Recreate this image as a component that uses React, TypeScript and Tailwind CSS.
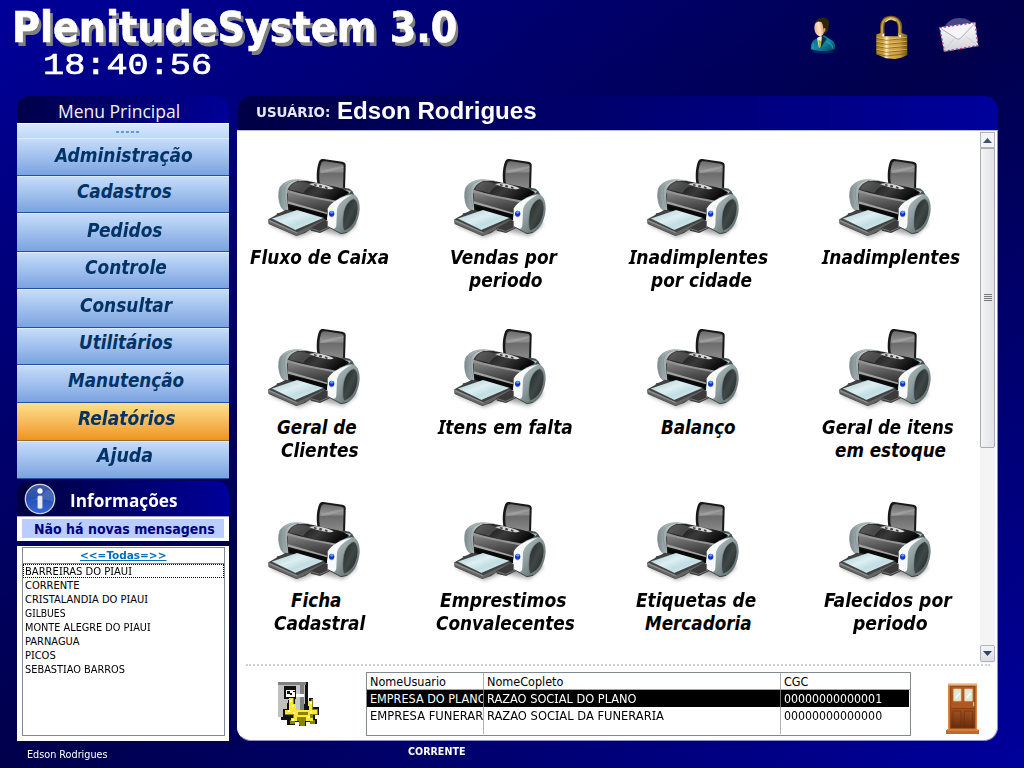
import { Fragment, useLayoutEffect, useRef, useState } from "react";

const TAHOMA = "font-['DejaVu_Sans_Condensed','DejaVu_Sans',sans-serif]";
const CALIBRI = "font-['Open_Sans',sans-serif]";

// Text stretched or squeezed horizontally so that it takes exactly `w` pixels.
function Fit({ text, w, x = 0, className = "", serifI = false }: { text: string; w: number; x?: number; className?: string; serifI?: boolean }) {
  const ref = useRef<HTMLSpanElement>(null);
  const [scale, setScale] = useState(1);
  useLayoutEffect(() => {
    if (ref.current) setScale(w / ref.current.offsetWidth);
  }, [w, text]);
  const parts = serifI ? text.split("I") : [text];
  return (
    <span className={"block shrink-0 whitespace-pre " + className} style={{ width: w, marginLeft: x }}>
      <span ref={ref} className="inline-block origin-left" style={{ transform: `scaleX(${scale})` }}>
        {parts.map((p, i) => (
          <Fragment key={i}>
            {i > 0 && <span className="font-['Noto_Sans',sans-serif] leading-none">I</span>}
            {p}
          </Fragment>
        ))}
      </span>
    </span>
  );
}

function PrinterDefs() {
  return (
    <svg width="0" height="0" className="absolute">
      <defs>
        <linearGradient id="tray" x1="0" y1="0" x2="0" y2="1">
          <stop offset="0" stopColor="#6a6a6a" /><stop offset=".35" stopColor="#929292" /><stop offset=".45" stopColor="#6c6c6c" /><stop offset="1" stopColor="#8b8b8b" />
        </linearGradient>
        <linearGradient id="lid" x1="0" y1="0" x2="1" y2=".4">
          <stop offset="0" stopColor="#555" /><stop offset=".35" stopColor="#222" /><stop offset=".6" stopColor="#3a3a3a" /><stop offset="1" stopColor="#080808" />
        </linearGradient>
        <linearGradient id="front" x1="0" y1="0" x2=".3" y2="1">
          <stop offset="0" stopColor="#8b8b8b" /><stop offset=".5" stopColor="#5d5d5d" /><stop offset="1" stopColor="#333" />
        </linearGradient>
        <linearGradient id="rim" x1="0" y1="0" x2="1" y2="0">
          <stop offset="0" stopColor="#78888a" /><stop offset=".45" stopColor="#c2cccd" /><stop offset=".6" stopColor="#fff" /><stop offset="1" stopColor="#e8eaea" />
        </linearGradient>
        <linearGradient id="side" x1="0" y1="0" x2="1" y2="1">
          <stop offset="0" stopColor="#c7d0d2" /><stop offset=".5" stopColor="#8b9a9c" /><stop offset="1" stopColor="#4e5a5c" />
        </linearGradient>
        <linearGradient id="vent" x1="0" y1="0" x2="1" y2="1">
          <stop offset="0" stopColor="#1c2426" /><stop offset=".5" stopColor="#404846" /><stop offset="1" stopColor="#1a2020" />
        </linearGradient>
        <linearGradient id="sheet" x1="0" y1="0" x2="1" y2="1">
          <stop offset="0" stopColor="#a9c5ce" /><stop offset=".4" stopColor="#dceff2" /><stop offset=".6" stopColor="#c2dde2" /><stop offset="1" stopColor="#e8f6f6" />
        </linearGradient>
        <filter id="soft" x="-20%" y="-50%" width="140%" height="200%"><feGaussianBlur stdDeviation="6" /></filter>
      </defs>
    </svg>
  );
}

function Printer() {
  return (
    <svg viewBox="0 0 360 300" width="120" height="100" className="ml-[15px] block">
      <path d="M45 225L130 262L185 240L265 258L305 225L300 210H60Z" fill="#000" opacity=".35" filter="url(#soft)" />
      <path d="M130 89C104 88 82 98 74 114C69 130 70 152 77 168C82 179 90 184 104 184L112 182V110L160 93Z" fill="url(#rim)" stroke="#849294" strokeWidth="2" />
      <path d="M132 92C112 91 96 98 90 112C86 128 88 150 96 172" fill="none" stroke="#8d9a9c" strokeWidth="3" />
      <path d="M187 100C183 76 186 48 193 33C197 27 202 26 210 28L262 35C270 37 273 41 272 49L270 122L190 106Z" fill="#181818" />
      <path d="M194 96C191 74 194 50 200 37C203 33 207 33 212 34L259 41C265 42 267 45 266 51L264 116L196 102Z" fill="url(#tray)" />
      <path d="M198 62C222 58 244 50 265 49V54C244 58 220 68 196 70Z" fill="#b4b4b4" opacity=".45" />
      <path d="M262 112L284 116L292 124L300 137L262 136Z" fill="#465052" /><path d="M268 119L288 123L284 130L270 127Z" fill="#b4c0c2" />
      <path d="M102 120L96 132L100 184L130 197L215 210L222 176L268 140L250 130Z" fill="#151515" />
      <path d="M97 122L250 156L270 140L264 154L222 172L216 193L99 157Z" fill="url(#front)" />
      <path d="M103 168L190 182L216 194V210L206 213L108 190Z" fill="#090909" />
      <path d="M99 154L217 188V193L99 161Z" fill="#a2a2a2" />
      <path d="M128 93C154 89 176 97 197 101C230 108 262 112 282 127L252 156C202 145 150 135 97 121C104 104 116 95 128 93Z" fill="url(#lid)" />
      <path d="M98 119C150 136 204 144 250 153L270 139L252 160C202 150 146 141 96 126Z" fill="#949494" />
      <path d="M125 97C144 93 161 99 178 106C162 108 151 119 145 129L103 118C109 105 117 99 125 97Z" fill="#777" opacity=".45" />
      <path d="M162 102C177 97 210 101 236 115C229 120 217 118 205 115C190 113 174 107 162 102Z" fill="#d8d8d8" />
      <path d="M178 102l8 2-3 5-7-3zM194 104l8 3-3 6-7-3zM211 109l8 4-3 4-7-3z" fill="#404040" />
      <path d="M66 190L88 186L106 194L90 205L63 202Z" fill="#4c4c4c" />
      <path d="M40 208L92 179L112 182L211 207L150 249L124 258L41 222Z" fill="#414141" />
      <path d="M40 209L125 247L211 207V213L126 258L41 220Z" fill="#646464" />
      <path d="M40 208L125 246L128 251L44 215Z" fill="#8c8c8c" />
      <path d="M49 206L126 180L207 204L121 241Z" fill="url(#sheet)" />
      <path d="M49 206L121 241L207 204" fill="none" stroke="#2c3436" strokeWidth="2" />
      <path d="M165 235L209 210L226 216L232 231L195 249L168 242Z" fill="#3b3b3b" />
      <path d="M168 236L194 244L231 228" fill="none" stroke="#777" strokeWidth="3" />
      <path d="M219 175C230 155 262 136 290 132C306 134 314 150 314 176C312 208 299 236 277 248L258 252L219 230Z" fill="url(#side)" />
      <path d="M218 176C229 156 256 141 290 134C268 145 250 160 246 178L244 226C243 236 238 238 230 235L218 230Z" fill="#f8f9fa" />
      <path d="M265 192C269 168 280 151 296 146C307 150 311 166 308 186C305 210 293 233 268 243C261 238 263 208 265 192Z" fill="url(#vent)" stroke="#7e8e90" strokeWidth="2" />
      <path d="M219 230L258 251L276 247" stroke="#3e4848" strokeWidth="3" fill="none" />
      <ellipse cx="230" cy="191" rx="8" ry="9" fill="#142ec8" /><ellipse cx="230" cy="187" rx="5" ry="4" fill="#48a6ff" /><path d="M224 198Q230 204 236 197" stroke="#6c7de0" strokeWidth="2" fill="none" />
    </svg>
  );
}

function UserIcon() {
  return (
    <svg viewBox="0 0 90 120" width="30" height="40">
      <defs>
        <linearGradient id="suit" x1="0" y1="0" x2="1" y2="1"><stop offset="0" stopColor="#0a5a78" /><stop offset=".5" stopColor="#128ca4" /><stop offset="1" stopColor="#04405c" /></linearGradient>
        <linearGradient id="skin" x1="0" y1="0" x2="1" y2="0"><stop offset="0" stopColor="#f0b080" /><stop offset=".5" stopColor="#ffe4d0" /><stop offset="1" stopColor="#d89468" /></linearGradient>
      </defs>
      <ellipse cx="44" cy="107" rx="32" ry="6" fill="#0a6a9a" opacity=".3" />
      <path d="M9 100C8 82 12 73 28 67L48 58L70 72C81 78 83 90 81 100C66 107 26 107 9 100Z" fill="url(#suit)" />
      <path d="M27 66L38 60L44 64L38 90L33 96Z" fill="#e9ead8" /><path d="M31 72L39 75L38 94L34 96Z" fill="#b8ac20" /><path d="M42 60L56 68L38 96Z" fill="#083044" />
      <ellipse cx="34" cy="38" rx="15" ry="23" fill="url(#skin)" transform="rotate(-8 34 38)" />
      <path d="M20 24C24 3 52 -2 62 14C65 27 62 41 55 52C49 58 47 52 48 45C45 35 46 28 41 18C31 14 25 17 20 24Z" fill="#2e2408" />
      <path d="M47 37Q54 33 52 45L46 51Z" fill="#dc965c" />
      <path d="M57 78Q73 83 74 97M17 82Q14 90 15 98" stroke="#30c0cf" strokeWidth="4" opacity=".5" fill="none" />
    </svg>
  );
}

function LockIcon() {
  return (
    <svg viewBox="0 0 100 135" width="33.3" height="45">
      <defs><linearGradient id="gold"><stop offset="0" stopColor="#a98024" /><stop offset=".22" stopColor="#c79d3e" /><stop offset=".33" stopColor="#fff1bb" /><stop offset=".43" stopColor="#d5ad52" /><stop offset=".75" stopColor="#c89b3f" /><stop offset="1" stopColor="#7b5a15" /></linearGradient></defs>
      <path d="M22 65V35C22 18 32 9 48 9C63 9 75 19 75 36V66" fill="none" stroke="#73591a" strokeWidth="13" />
      <path d="M21 64V35C21 18 32 8 48 8C62 8 74 19 74 36V66" fill="none" stroke="#c4a048" strokeWidth="6" />
      <path d="M31 20Q46 5 62 17" fill="none" stroke="#f6e090" strokeWidth="4" />
      <path d="M4 58L18 54H28V64H69V55H82L97 60V120L79 128L60 132L33 130L4 118Z" fill="url(#gold)" />
      <path d="M4 70L34 76L96 70M4 82L34 88L96 82M4 94L34 100L96 94M4 106L34 112L96 106M5 117L35 123L96 116" fill="none" stroke="#735016" strokeWidth="2.5" opacity=".8" />
      <path d="M4 67L34 73L96 67M4 79L34 85L96 79M4 91L34 97L96 91M4 103L34 109L96 103" fill="none" stroke="#f1d17a" strokeWidth="2" opacity=".8" />
      <path d="M22 58h5v6h-5zM73 60h5v6h-5z" fill="#fff" />
    </svg>
  );
}

function MailIcon() {
  return (
    <svg viewBox="0 0 126 114" width="42" height="38">
      <defs><linearGradient id="env" x1="0" y1="0" x2="0" y2="1"><stop offset="0" stopColor="#fff" /><stop offset="1" stopColor="#d2d2d6" /></linearGradient></defs>
      <ellipse cx="65" cy="41" rx="46" ry="35" fill="#484884" />
      <path d="M4 34L112 19L121 90L18 107Z" fill="url(#env)" />
      <path d="M5 35L111 20L120 89L19 106Z" fill="none" stroke="#d43c54" strokeWidth="4" strokeDasharray="7 18" />
      <path d="M5 35L111 20L120 89L19 106Z" fill="none" stroke="#4855b4" strokeWidth="4" strokeDasharray="7 18" strokeDashoffset="-12" />
      <path d="M20 101L48 68M117 86L84 62" stroke="#c4c4ca" strokeWidth="2" /><path d="M9 38L56 68Q63 73 68 66L109 24Z" fill="#f6f6f8" /><path d="M9 38L56 68Q63 73 68 66L109 24" fill="none" stroke="#a9aab3" strokeWidth="3" />
    </svg>
  );
}

function InfoIcon() {
  return (
    <svg viewBox="0 0 96 96" width="32" height="32" className="shrink-0">
      <defs><linearGradient id="blue" x1="0" y1="0" x2="0" y2="1"><stop offset="0" stopColor="#3c5ba4" /><stop offset=".5" stopColor="#2850b4" /><stop offset="1" stopColor="#3467dd" /></linearGradient></defs>
      <circle cx="48" cy="48" r="44" fill="url(#blue)" stroke="#d4d4cf" strokeWidth="4" /><path d="M8 56Q38 52 66 24Q78 16 85 29Q92 45 87 58Q64 42 8 56" fill="#7090d4" opacity=".35" />
      <circle cx="48" cy="24" r="8" fill="#fff" /><rect x="41" y="38" width="14" height="39" rx="4" fill="#e8e9ef" stroke="#aab0c8" />
    </svg>
  );
}

function GearIcon() {
  return (
    <svg viewBox="0 0 42 44" width="42" height="44" shapeRendering="crispEdges">
      <path d="M0 0h30v38H3v-3H0z" fill="#111" /><path d="M0 1h5v34H0z" fill="#c0c0c0" /><path d="M0 0h28v3H0z" fill="#808080" /><path d="M5 3h22v24H5z" fill="#c0c0c0" /><path d="M6 4h12v13H6z" fill="#111" /><path d="M8 8h9v7H8z" fill="#fff" /><path d="M9 9h3v2h2v2h-2v-1H9zM15 9h2v1h-2z" fill="#111" />
      <path d="M11 16h6v6h14v-6h4v9h6v8h-4v4h2v5h-7v-2h-4v4h-7v-4h-4v3h-8v-5h3v-4H5v-7h4v-4z" fill="#111" />
      <path d="M12 16h4v7h3v5h12v-5h2v-6h2v10h5v6h-5v5h2v4h-5v-3h-5v5h-5v-5h-5v3h-5v-4h3v-5H7v-5h4z" fill="#8c8400" />
      <path d="M11 16h4v6h3v6h13v-4h-1v-5h4v9h5v4h-7v4h3v3h-7v-4h-9v4h-6v-3h3v-4H7v-4h4z" fill="#ffe832" />
      <path d="M12 18h2v2h-2zM14 23h2v2h-2zM10 28h2v2h-2zM15 30h2v2h-2zM20 31h3v2h-3zM26 30h3v2h-3zM32 29h2v2h-2zM32 20h2v2h-2zM30 34h2v2h-2zM14 37h2v2h-2z" fill="#fffed0" />
      <path d="M20 30h10v3H20zM21 37h6v6h-6z" fill="#8c8400" />
      <path d="M18 3h4v25h-4z" fill="#c8c8c8" /><path d="M22 3h4v25h-4z" fill="#808080" /><path d="M18 12h8v3h-8z" fill="#fff" />
    </svg>
  );
}

function DoorIcon() {
  return (
    <svg viewBox="0 0 99 156" width="33" height="52">
      <defs><linearGradient id="wood" x1="0" y1="0" x2="0" y2="1"><stop offset="0" stopColor="#b05d24" /><stop offset=".5" stopColor="#ad5823" /><stop offset="1" stopColor="#652d0e" /></linearGradient></defs>
      <path d="M6 2H93V140H99V153H0V142L6 138Z" fill="#b86028" /><path d="M6 2h87v6H6z" fill="#eeb27d" /><path d="M6 6h5v134H6zM89 7h4v134h-4z" fill="#dc8444" />
      <path d="M14 10H86V135H14Z" fill="url(#wood)" stroke="#733812" strokeWidth="2" />
      <path d="M23 18H45V54H23ZM56 18H79V54H56Z" fill="#dfe8d6" stroke="#efc698" strokeWidth="2" /><path d="M29 45L41 30M62 45L74 30" stroke="#f4faee" strokeWidth="6" />
      <path d="M16 77H84M21 84H45V130H21ZM55 84H80V130H55Z" fill="none" stroke="#6c2d0e" strokeWidth="2" /><path d="M81 57h4v13h-4z" fill="#d6bd91" /><path d="M3 140H96L99 153H0Z" fill="#c06828" /><path d="M3 141H96" stroke="#e89850" strokeWidth="3" />
    </svg>
  );
}

const menu = [
  { t: "Administração", h: "h-[38px]", p: "pt-[6px]", x: 38, w: 138 },
  { t: "Cadastros", h: "h-[37px]", p: "pt-[4px]", x: 60, w: 95 },
  { t: "Pedidos", h: "h-[39px]", p: "pt-[6px]", x: 70, w: 76 },
  { t: "Controle", h: "h-[37px]", p: "pt-[4px]", x: 68, w: 82 },
  { t: "Consultar", h: "h-[39px]", p: "pt-[5px]", x: 63, w: 92 },
  { t: "Utilitários", h: "h-[37px]", p: "pt-[3px]", x: 62, w: 94 },
  { t: "Manutenção", h: "h-[38px]", p: "pt-[4px]", x: 51, w: 116 },
  { t: "Relatórios", h: "h-[38px]", p: "pt-[4px]", x: 61, w: 98, on: true },
  { t: "Ajuda", h: "h-[38px]", p: "pt-[3px]", x: 80, w: 56 },
];

const reports: [string, number, number][][] = [
  [["Fluxo de Caixa", 10, 139]],
  [["Vendas por", 24, 107], ["periodo", 43, 74]],
  [["Inadimplentes", 10, 139], ["por cidade", 32, 101]],
  [["Inadimplentes", 11, 138]],
  [["Geral de", 37, 80], ["Clientes", 41, 78]],
  [["Itens em falta", 12, 135]],
  [["Balanço", 42, 75]],
  [["Geral de itens", 11, 132], ["em estoque", 24, 111]],
  [["Ficha", 51, 50], ["Cadastral", 34, 91]],
  [["Emprestimos", 14, 126], ["Convalecentes", 10, 139]],
  [["Etiquetas de", 17, 120], ["Mercadoria", 26, 107]],
  [["Falecidos por", 13, 128], ["periodo", 42, 75]],
];

const cities: [string, number][] = [
  ["BARREIRAS DO PIAUI", 107], ["CORRENTE", 54], ["CRISTALANDIA DO PIAUI", 123], ["GILBUES", 41],
  ["MONTE ALEGRE DO PIAUI", 126], ["PARNAGUA", 55], ["PICOS", 31], ["SEBASTIAO BARROS", 100],
];

function Cell({ t, w, className }: { t: string; w: number; className: string }) {
  return <div className={"overflow-hidden pl-[3px] " + className}><Fit text={t} w={w} serifI /></div>;
}

export default function App() {
  return (
    <div className={"flex h-[768px] w-[1024px] flex-col overflow-hidden bg-linear-to-br from-[#00009a] via-[#00004c] to-[#00009c] " + TAHOMA}>
      <PrinterDefs />
      <header className="flex h-[96px] shrink-0 justify-between">
        <div className="pl-[12px]">
          <Fit text="PlenitudeSystem 3.0" w={445} className="h-[50px] text-[42.67px] leading-[54px] font-bold text-white [-webkit-text-stroke:0.6px_white] [text-shadow:3px_4px_0_#808080]" />
          <Fit text="18:40:56" w={169} x={31} className="h-[32px] font-['Liberation_Mono',monospace] text-[30px] leading-[32px] text-white [-webkit-text-stroke:0.7px_white]" />
        </div>
        <div className="flex w-[216px]">
          <div className="w-[67px] pt-[16px]"><UserIcon /></div>
          <div className="w-[63px] pt-[15px]"><LockIcon /></div>
          <div className="pt-[16px]"><MailIcon /></div>
        </div>
      </header>

      <div className="flex h-[645px] shrink-0 pl-[17px]">
        <aside className="flex w-[212px] shrink-0 flex-col">
          <div className="h-[27px] rounded-t-[12px] bg-linear-to-r from-[#00004a] to-[#000098] pl-[41px]">
            <Fit text="Menu Principal" w={122} className={"text-[17.5px] leading-[30px] text-[#f0f0f0] " + CALIBRI} />
          </div>
          <div className="flex h-[15px] justify-center gap-[2px] border-t border-white bg-linear-to-b from-[#d8e8ff] to-[#bdd8f8] pt-[7px] pl-[8px]">
            {[0, 1, 2, 3, 4].map((i) => <i key={i} className="h-[2px] w-[3px] -skew-x-12 bg-[#6a94d4]" />)}
          </div>
          {menu.map((m) => (
            <div key={m.t} className={`shrink-0 border-b ${m.h} ${m.p} ${m.on ? "border-[#9a6a3a] bg-linear-to-b from-[#fde08c] to-[#ee9517]" : "border-[#2450a0] bg-linear-to-b from-[#c8defa] to-[#7ba3e0] shadow-[inset_0_1px_0_#dcebff]"}`}>
              <Fit text={m.t} w={m.w} x={m.x} className="text-[18.67px] leading-[24px] font-bold text-[#003366] italic" />
            </div>
          ))}
          <div className="mt-[2px] flex h-[35px] shrink-0 items-center rounded-t-[12px] bg-linear-to-r from-[#000040] to-[#00009a] pl-[7px]">
            <InfoIcon />
            <Fit text="Informações" w={107} x={14} className={"pt-[2px] text-[17.5px] leading-[30px] font-bold text-white " + CALIBRI} />
          </div>
          <div className="h-[25px] shrink-0 border-t border-[#a0a0c8] bg-white px-[5px] pt-[2px]">
            <div className="h-[19px] bg-[#bbccff] pl-[12px]">
              <Fit text="Não há novas mensagens" w={181} className="text-[14px] leading-[20px] font-bold text-[#000080]" />
            </div>
          </div>
          <div className="mt-[5px] h-[195px] shrink-0 bg-white px-[5px] pt-[1px]">
            <div className="h-[189px] w-[203px] border border-[#808890] text-[11px]">
              <div className="h-[16px] border-b border-[#808890] pl-[57px]">
                <Fit text="<<=Todas=>>" w={87} className="leading-[15px] font-bold text-[#0070b8] [&>span]:underline" />
              </div>
              {cities.map(([c, w], i) => (
                <div key={c} className={"h-[14px] pl-[2px] text-black " + (i === 0 ? "outline outline-dotted -outline-offset-1" : "")}>
                  <Fit text={c} w={w} className="pt-[1px] leading-[14px]" serifI />
                </div>
              ))}
            </div>
          </div>
        </aside>

        <main className="ml-[8px] flex w-[761px] shrink-0 flex-col">
          <div className="ml-[1px] flex h-[34px] shrink-0 rounded-t-[14px] bg-linear-to-r from-[#000046] to-[#00009c] pl-[18px]">
            <Fit text="USUÁRIO:" w={74} className="text-[13.5px] leading-[33px] font-bold text-[#e8e8f4]" serifI />
            <Fit text="Edson Rodrigues" w={200} x={7} className="font-['Liberation_Sans',sans-serif] text-[24px] leading-[30px] font-bold text-white" />
          </div>
          <div className="flex h-[611px] shrink-0 flex-col rounded-b-[14px] border border-t-[#b8b8d0] border-r-[#9090c8] border-b-[#9090c8] border-l-white bg-white">
            <div className="flex h-[532px] shrink-0 justify-between">
              <div className="grid grid-cols-[186px_193px_192px_160px] grid-rows-[170px_173px_160px] pt-[19px] pl-[2px]">
                {reports.map((lines, i) => (
                  <div key={i} className="w-[160px]">
                    <Printer />
                    <div className="-mt-[4px]">
                      {lines.map(([t, x, w]) => (
                        <Fit key={t} text={t} w={w} x={x} className="h-[23px] text-[18.67px] leading-[23px] font-bold text-black italic" serifI />
                      ))}
                    </div>
                  </div>
                ))}
              </div>
              <div className="mr-[2px] flex w-[15px] shrink-0 flex-col bg-[#f4f4f4]">
                <div className="mt-[1px] flex h-[16px] shrink-0 items-center justify-center border border-[#b0b4bc] bg-[#f4f4f6]">
                  <svg width="9" height="5"><path d="M0 5L4.5 0L9 5Z" fill="#44516e" /></svg>
                </div>
                <div className="flex h-[300px] shrink-0 flex-col items-center justify-center gap-[1px] rounded-b-[2px] border border-[#a8acb4] bg-linear-to-r from-[#f4f4f4] to-[#e2e3e6] pb-[2px]">
                  {[0, 1, 2, 3].map((i) => <i key={i} className="h-[1px] w-[8px] bg-[#777]" />)}
                </div>
                <div className="grow" />
                <div className="mb-[1px] flex h-[17px] shrink-0 items-center justify-center rounded-[2px] border border-[#b0b4bc] bg-linear-to-b from-[#f4f4f6] to-[#dcdee4]">
                  <svg width="9" height="5"><path d="M0 0L4.5 5L9 0Z" fill="#34416a" /></svg>
                </div>
              </div>
            </div>
            <div className="mr-[7px] ml-[8px] mt-[1px] shrink-0 border-t-2 border-dotted border-[#d0d0d0]" />
            <div className="flex pl-[40px]">
              <div className="w-[88px] pt-[16px]"><GearIcon /></div>
              <div className="mt-[6px] h-[64px] w-[545px] border border-[#808890] text-[12.5px] leading-[17px] text-black">
                <div className="flex h-[17px] border-b border-[#a8a8a8]">
                  <Cell t="NomeUsuario" w={76} className="w-[117px] border-r border-[#b0b0b0]" />
                  <Cell t="NomeCopleto" w={76} className="w-[297px] border-r border-[#b0b0b0]" />
                  <Cell t="CGC" w={24} className="w-[128px]" />
                </div>
                <div className="mr-[1px] flex h-[17px] bg-black text-white">
                  <Cell t="EMPRESA DO PLANO" w={117} className="w-[117px] border-r border-[#707070]" />
                  <Cell t="RAZAO SOCIAL DO PLANO" w={150} className="w-[297px] border-r border-[#707070]" />
                  <Cell t="00000000000001" w={98} className="w-[128px]" />
                </div>
                <div className="flex h-[27px]">
                  <Cell t="EMPRESA FUNERAR" w={113} className="w-[117px] border-r border-[#b0b0b0]" />
                  <Cell t="RAZAO SOCIAL DA FUNERARIA" w={177} className="w-[297px] border-r border-[#b0b0b0]" />
                  <Cell t="00000000000000" w={98} className="w-[128px]" />
                </div>
              </div>
              <div className="pt-[17px] pl-[35px]"><DoorIcon /></div>
            </div>
          </div>
        </main>
      </div>

      <footer className="flex text-[11px] text-white">
        <Fit text="Edson Rodrigues" w={81} x={27} className="pt-[6px] leading-[16px]" />
        <Fit text="CORRENTE" w={57} x={300} className="pt-[3px] leading-[16px] font-bold" />
      </footer>
    </div>
  );
}
